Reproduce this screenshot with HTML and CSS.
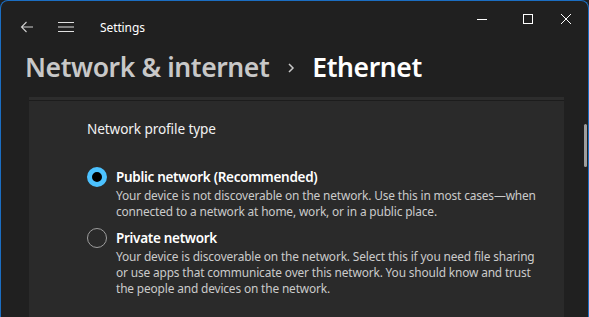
FILE: index.html
```html
<!DOCTYPE html>
<html>
<head>
<meta charset="utf-8">
<link rel="stylesheet" href="styles.css">
</head>
<body>
<div class="window">
  <div class="titlebar">
    <div class="tb-left">
      <svg class="ic back" width="14" height="14" viewBox="0 0 14 14"><path d="M13 7H1.5M6.5 2L1.5 7l5 5" fill="none" stroke="#cfcfcf" stroke-width="1.1"/></svg>
      <svg class="ic menu" width="16" height="12" viewBox="0 0 16 12"><path d="M0 1.5h16M0 6h16M0 10.5h16" fill="none" stroke="#e0e0e0" stroke-width="1.1"/></svg>
      <span class="app-title">Settings</span>
    </div>
    <div class="tb-right">
      <svg class="ctl" width="12" height="12" viewBox="0 0 12 12"><path d="M1 6.5h10" stroke="#fff" stroke-width="1"/></svg>
      <svg class="ctl" width="12" height="12" viewBox="0 0 12 12"><rect x="1.5" y="1.5" width="9" height="9" fill="none" stroke="#fff" stroke-width="1"/></svg>
      <svg class="ctl" width="12" height="12" viewBox="0 0 12 12"><path d="M1 1l10 10M11 1L1 11" stroke="#fff" stroke-width="1"/></svg>
    </div>
  </div>
  <div class="body">
    <div class="main">
      <h1 class="crumbs"><span class="parent">Network &amp; internet</span><svg class="chev" width="8" height="12" viewBox="0 0 8 12"><path d="M2 2l4 4-4 4" fill="none" stroke="#c8c8c8" stroke-width="1.5"/></svg><span class="current">Ethernet</span></h1>
      <div class="card">
        <div class="card-top"></div>
        <div class="card-body">
          <div class="section-title">Network profile type</div>
          <div class="options">
            <div class="option">
              <span class="radio on"></span>
              <div class="opt-text">
                <div class="opt-title">Public network (Recommended)</div>
                <div class="opt-desc">Your device is not discoverable on the network. Use this in most cases—when connected to a network at home, work, or in a public place.</div>
              </div>
            </div>
            <div class="option">
              <span class="radio"></span>
              <div class="opt-text">
                <div class="opt-title">Private network</div>
                <div class="opt-desc">Your device is discoverable on the network. Select this if you need file sharing or use apps that communicate over this network. You should know and trust the people and devices on the network.</div>
              </div>
            </div>
          </div>
        </div>
      </div>
    </div>
    <div class="scrollbar"><div class="thumb"></div></div>
  </div>
</div>
</body>
</html>
```
FILE: styles.css
```css
* { box-sizing: border-box; }
html, body { margin: 0; padding: 0; background: #202020; }
body { font-family: "Noto Sans", "Open Sans", sans-serif; color: #fff; }
.window {
  width: 589px;
  height: 317px;
  background: #202020;
  border: 1px solid #1b6ec2;
  border-bottom: none;
  border-radius: 8px 8px 0 0;
  overflow: hidden;
  display: flex;
  flex-direction: column;
}
.titlebar {
  height: 46px;
  display: flex;
  align-items: center;
  justify-content: space-between;
  flex-shrink: 0;
}
.tb-left { display: flex; align-items: center; padding-left: 19px; padding-top: 6px; }
.menu { margin-left: 24px; }
.app-title { margin-left: 26px; font-size: 12px; color: #fff; letter-spacing: -0.1px; }
.tb-right { display: flex; align-items: center; gap: 26px; padding-right: 16px; margin-top: -10px; }
.ctl:nth-child(1) { margin-right: 8px; }
.body { flex: 1; display: flex; min-height: 0; }
.main { flex: 1; min-width: 0; padding-left: 24px; }
.crumbs {
  margin: 0;
  height: 50px;
  padding-bottom: 10px;
  display: flex;
  align-items: center;
  font-size: 26.5px;
  font-weight: 600;
  letter-spacing: -0.4px;
}
.parent { color: #c8c8c8; }
.chev { margin: 2px 17px 0 18px; }
.current { color: #fff; }
.card { margin-left: 4px; width: 535px; }
.card-top { height: 4px; background: #2d2d2d; border-bottom: 1px solid #1c1c1c; }
.card-body { background: #2a2a2a; padding: 18px 0 30px 58px; height: 240px; }
.section-title { font-size: 13.6px; color: #f2f2f2; letter-spacing: -0.1px; }
.options { margin-top: 29px; display: flex; flex-direction: column; gap: 9px; }
.option { display: flex; gap: 9px; }
.radio {
  width: 20px; height: 20px; border-radius: 50%;
  border: 1px solid #9d9d9d;
  flex-shrink: 0;
}
.radio.on { border: 5px solid #4cc2ff; background: #000; }
.opt-title { font-size: 13.5px; font-weight: 600; line-height: 20px; color: #fff; letter-spacing: -0.3px; }
.opt-desc { font-size: 11.9px; line-height: 16px; color: #cbcbcb; width: 422px; letter-spacing: -0.15px; }
.scrollbar { width: 24px; }
.thumb { margin: 77px 0 0 20px; width: 3px; height: 43px; border-radius: 2px; background: #9e9e9e; }
```
